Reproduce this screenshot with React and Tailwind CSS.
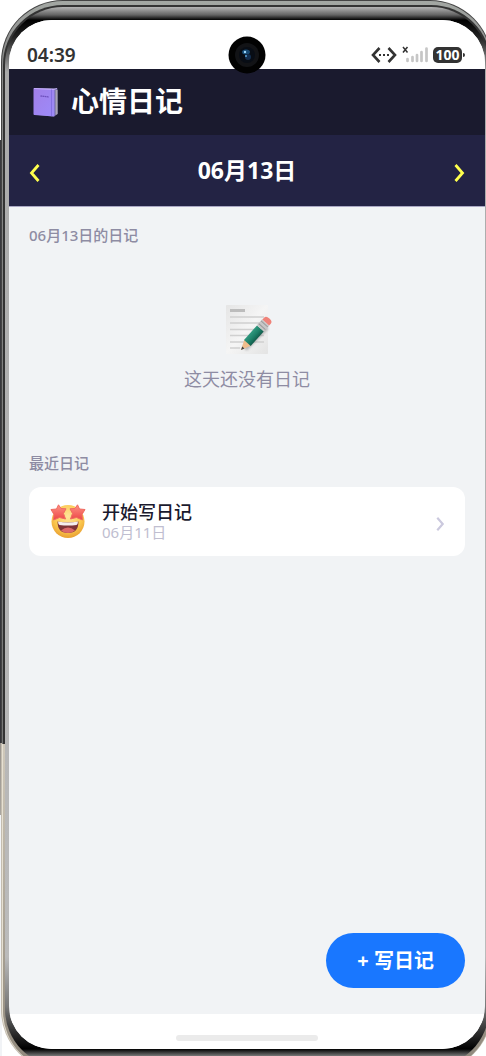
import { useState } from "react";

function Notebook() {
  return (
    <svg viewBox="0 0 26 30" className="h-[30px] w-[26px] shrink-0" aria-hidden="true">
      <defs>
        <linearGradient id="cover" x1="0" y1="0" x2="1" y2="1">
          <stop offset="0" stopColor="#a17fe8" />
          <stop offset="1" stopColor="#9d8bfa" />
        </linearGradient>
      </defs>
      <path d="M3 1 L24 1 L24.500 26.500 L21 29.500 L5 28 Z" fill="#77718f" />
      <path d="M19 1.500 L24.500 1.500 V27 L21 29.500 Z" fill="#6d66a0" />
      <path d="M22.500 3 L24.500 3 V27 L22.500 28 Z" fill="#aaa6b4" />
      <path d="M.5 1.500 Q.5 1 1.500 1 L20.500 2 Q21.500 2 21.500 3 V28.500 Q21.500 29.500 20.500 29.500 L1.500 28 Q.5 28 .5 27 Z" fill="url(#cover)" />
      <path d="M1 1.500 L21 2.500 L24 1.500" fill="none" stroke="#cbb8ff" strokeWidth=".8" />
      <path d="M18.500 2.500 V29" stroke="#7f69de" strokeWidth=".8" />
      <path d="M7.500 9 L16 10" stroke="#6d50bd" strokeWidth="1.300" strokeDasharray="1.500 .5" />
    </svg>
  );
}

function Memo() {
  return (
    <svg viewBox="0 0 50 52" className="h-[52px] w-[50px]" aria-hidden="true">
      <defs>
        <linearGradient id="paper" x1="0" y1="0" x2="1" y2="1">
          <stop offset="0" stopColor="#e5e5e5" />
          <stop offset=".5" stopColor="#f5f5f5" />
          <stop offset="1" stopColor="#e3e3e3" />
        </linearGradient>
        <linearGradient id="wood" x1="0" y1="0" x2="1" y2="0">
          <stop offset="0" stopColor="#31997f" />
          <stop offset=".55" stopColor="#1d8068" />
          <stop offset="1" stopColor="#125c4b" />
        </linearGradient>
        <filter id="soft"><feGaussianBlur stdDeviation="1.300" /></filter>
      </defs>
      <rect x="4" y="2" width="42" height="49" rx=".8" fill="url(#paper)" />
      <path d="M8 7.500 H23" stroke="#bcbcbc" strokeWidth="3" />
      <path d="M8 14 H42 M8 20 H42 M8 26.500 H42 M8 32.500 H42 M8 39 H42 M8 45 H18" stroke="#d0d0d0" strokeWidth="1.500" />
      <path d="M23 46 L45 24" stroke="#777" strokeWidth="5" opacity=".45" filter="url(#soft)" />
      <g transform="translate(19 47) rotate(42)">
        <path d="M0 0 L-4.500 -10 H4.500 Z" fill="#efbd8c" />
        <path d="M0 0 L-1.500 -3.500 H1.500 Z" fill="#444" />
        <rect x="-4.500" y="-29" width="9" height="19.500" fill="url(#wood)" />
        <rect x="-4.700" y="-37" width="9.400" height="8" fill="#c7c7c7" />
        <path d="M-4.500 -35 H4.500 M-4.500 -31.500 H4.500" stroke="#9a9a9a" />
        <path d="M-4.500 -37 V-39.500 Q-4.500 -42.500 0 -42.500 Q4.500 -42.500 4.500 -39.500 V-37 Z" fill="#ef8279" />
      </g>
    </svg>
  );
}

function StarStruck() {
  return (
    <svg viewBox="0 0 36 36" className="h-9 w-9 shrink-0" aria-hidden="true">
      <defs>
        <radialGradient id="face" cx=".5" cy=".35" r=".65">
          <stop offset="0" stopColor="#ffe59b" />
          <stop offset=".65" stopColor="#fbc84f" />
          <stop offset="1" stopColor="#e9a032" />
        </radialGradient>
        <linearGradient id="star" x1="0" y1="0" x2="0" y2="1">
          <stop offset="0" stopColor="#ff9384" />
          <stop offset="1" stopColor="#ec4546" />
        </linearGradient>
      </defs>
      <circle cx="18" cy="17.500" r="16.500" fill="url(#face)" />
      <g fill="url(#star)" stroke="#ef6b61" strokeWidth="1" strokeLinejoin="round">
        <path d="M8.500 .8 L11 4.500 L16 4.800 L13.500 9.500 L15.500 15 L9.500 13.500 L3.500 16 L4 10.500 L1 5.500 L6.500 5 Z" />
        <path d="M27.500 .8 L25 4.500 L20 4.800 L22.500 9.500 L20.500 15 L26.500 13.500 L32.500 16 L32 10.500 L35 5.500 L29.500 5 Z" />
      </g>
      <path d="M7.500 17.500 Q18 19.500 28.500 17.500 Q28.500 29 18 29 Q7.500 29 7.500 17.500 Z" fill="#7e3438" />
      <path d="M11 26.500 Q18 20.500 25 26.500 Q22 29 18 29 Q14 29 11 26.500 Z" fill="#dc6869" />
      <path d="M8 17.500 Q18 19.500 28 17.500 Q28 20 26.500 21 Q18 22 9.500 21 Q8 20 8 17.500 Z" fill="#f4eeee" />
    </svg>
  );
}

function Chevron({ left = false, className }) {
  return (
    <svg viewBox="0 0 12 18" className={className} fill="none" stroke="currentColor" aria-hidden="true">
      <path d={left ? "M9.500 1 L2.500 9 L9.500 17" : "M2.500 1 L9.500 9 L2.500 17"} strokeWidth="2.800" />
    </svg>
  );
}

function StatusBar() {
  return (
    <div className="relative flex h-[49px] shrink-0 items-end justify-between bg-white pr-5 pl-[18px] text-[#333]">
      <time className="pb-1 text-[19px] leading-5 font-semibold">04:39</time>
      <div className="flex items-end gap-[5px] pb-1.5">
        <svg viewBox="0 0 26 16" className="h-4 w-[26px]" aria-hidden="true">
          <path d="M8.500 1 L2 8 L8.500 15 M17.500 1 L24 8 L17.500 15" fill="none" stroke="#333" strokeWidth="2.600" />
          <path d="M8 8 h2 M12 8 h2 M16 8 h2" stroke="#333" strokeWidth="2" />
        </svg>
        <svg viewBox="0 0 26 18" className="h-[18px] w-[26px]" aria-hidden="true">
          <path d="M1 2 L5.500 7.500 M5.500 2 L1 7.500" stroke="#333" strokeWidth="1.500" />
          <path d="M5.500 14 V16 M10.500 12 V16 M15 10 V16 M19.500 7 V16 M24.500 3.500 V16" stroke="#c6c6c6" strokeWidth="2.700" strokeLinecap="round" />
        </svg>
        <div className="flex items-center gap-px">
          <span className="flex h-4 w-[29px] items-center justify-center rounded-[5px] bg-[#333] text-[14px] leading-4 font-bold text-white">100</span>
          <span className="h-1 w-0.5 rounded-r bg-[#333]" />
        </div>
      </div>
      <svg viewBox="0 0 38 38" className="absolute top-4 left-1/2 z-10 h-[38px] w-[38px] -translate-x-1/2" aria-hidden="true">
        <circle cx="19" cy="19" r="18.500" fill="#020202" />
        <circle cx="19" cy="19" r="12" fill="#121316" />
        <circle cx="19" cy="19" r="8" fill="#080d15" />
        <ellipse cx="18" cy="16" rx="4" ry="2.500" fill="#174a75" />
        <circle cx="17" cy="16" r="1.200" fill="#9edcff" />
        <circle cx="20" cy="21" r="3" fill="#142f50" />
        <circle cx="18" cy="20" r="1" fill="#5aa3d6" />
      </svg>
    </div>
  );
}

function Diary() {
  const [day, setDay] = useState(13);
  const label = `06月${String(day).padStart(2, "0")}日`;
  return (
    <>
      <header className="flex h-[66px] shrink-0 items-center gap-3 bg-[#1a1a2e] px-6 text-white">
        <Notebook />
        <h1 className="pb-0.5 text-[28px] leading-8 font-bold">心情日记</h1>
      </header>
      <nav className="flex h-[72px] shrink-0 items-center justify-between border-b border-[#aaa8c4] bg-[#232344] px-5 text-[#ffff4d]">
        <button type="button" aria-label="前一天" className="pt-1" onClick={() => setDay(Math.max(1, day - 1))}>
          <Chevron left className="h-[18px] w-3" />
        </button>
        <h2 className="pb-0.5 text-[23px] leading-8 font-bold text-white">{label}</h2>
        <button type="button" aria-label="后一天" className="pt-1" onClick={() => setDay(Math.min(30, day + 1))}>
          <Chevron className="h-[18px] w-3" />
        </button>
      </nav>
      <div className="flex min-h-0 flex-1 flex-col px-5 pt-4 pb-[26px] text-[#8e8ca3]">
        <h3 className="text-[15px] leading-6 font-medium">{label}的日记</h3>
        <div className="flex flex-col items-center gap-3 pt-14">
          <Memo />
          <p className="text-[18px] leading-6">这天还没有日记</p>
        </div>
        <h3 className="mt-[60px] text-[15px] leading-6 font-medium">最近日记</h3>
        <button type="button" className="mt-3 flex h-[69px] shrink-0 items-center rounded-xl bg-white pr-5 pl-[21px] text-left">
          <StarStruck />
          <span className="ml-4 flex flex-1 flex-col">
            <span className="text-[18px] leading-5 font-medium text-[#1a1a2e]">开始写日记</span>
            <span className="text-[15px] leading-5 text-[#c0bed0]">06月11日</span>
          </span>
          <Chevron className="mt-1 h-[14px] w-[10px] text-[#cbc9de]" />
        </button>
        <button type="button" className="mt-auto h-[55px] shrink-0 self-end rounded-full bg-[#1977ff] px-[31px] text-[20px] leading-7 font-bold text-white">
          + 写日记
        </button>
      </div>
      <div className="flex h-[35px] shrink-0 items-start justify-center bg-white pt-[21px]">
        <div className="h-1.5 w-[142px] rounded-full bg-[#ebebeb]" />
      </div>
    </>
  );
}

export default function App() {
  return (
    <div className="flex h-screen flex-col overflow-hidden bg-white bg-[linear-gradient(to_bottom,#fff_140px,#3a3a3e_140px,#333338_743px,#9a958e_743px,#aaa69f_815px,#f1f3f6_815px)] bg-[length:2px_100%] bg-no-repeat font-['Noto_Sans','Noto_Sans_CJK_SC',sans-serif]">
      <div className="-mr-1.5 -mb-4 ml-px flex min-h-0 flex-1 flex-col rounded-[62px] bg-[linear-gradient(to_bottom,#444_743px,#c4bdb0_743px)] p-px">
        <div className="flex min-h-0 flex-1 flex-col rounded-[61px] bg-[linear-gradient(to_bottom,#a3a7a3,#888_60px,#777_743px,#e6e0d2_743px)] pt-1 pl-px">
          <div className="flex min-h-0 flex-1 flex-col rounded-[60px] bg-[linear-gradient(to_bottom,#333_739px,#cfc8ba_739px,#8e877b)] pt-0.5 pr-0.5 pb-1 pl-0.5">
            <div className="flex min-h-0 flex-1 flex-col rounded-[58px] bg-[linear-gradient(to_bottom,#b5b5b5,#626262_8px,#000_13px,#222_30px,#aaa_65px,#bbb_950px,#777_calc(100%-60px),#000_calc(100%-18px),#888_calc(100%-10px))] px-[4px] pt-[13px] pb-[18px]">
              <main className="flex min-h-0 flex-1 flex-col overflow-hidden rounded-[43px] bg-[#f1f3f5]">
                <StatusBar />
                <Diary />
              </main>
            </div>
          </div>
        </div>
      </div>
    </div>
  );
}
